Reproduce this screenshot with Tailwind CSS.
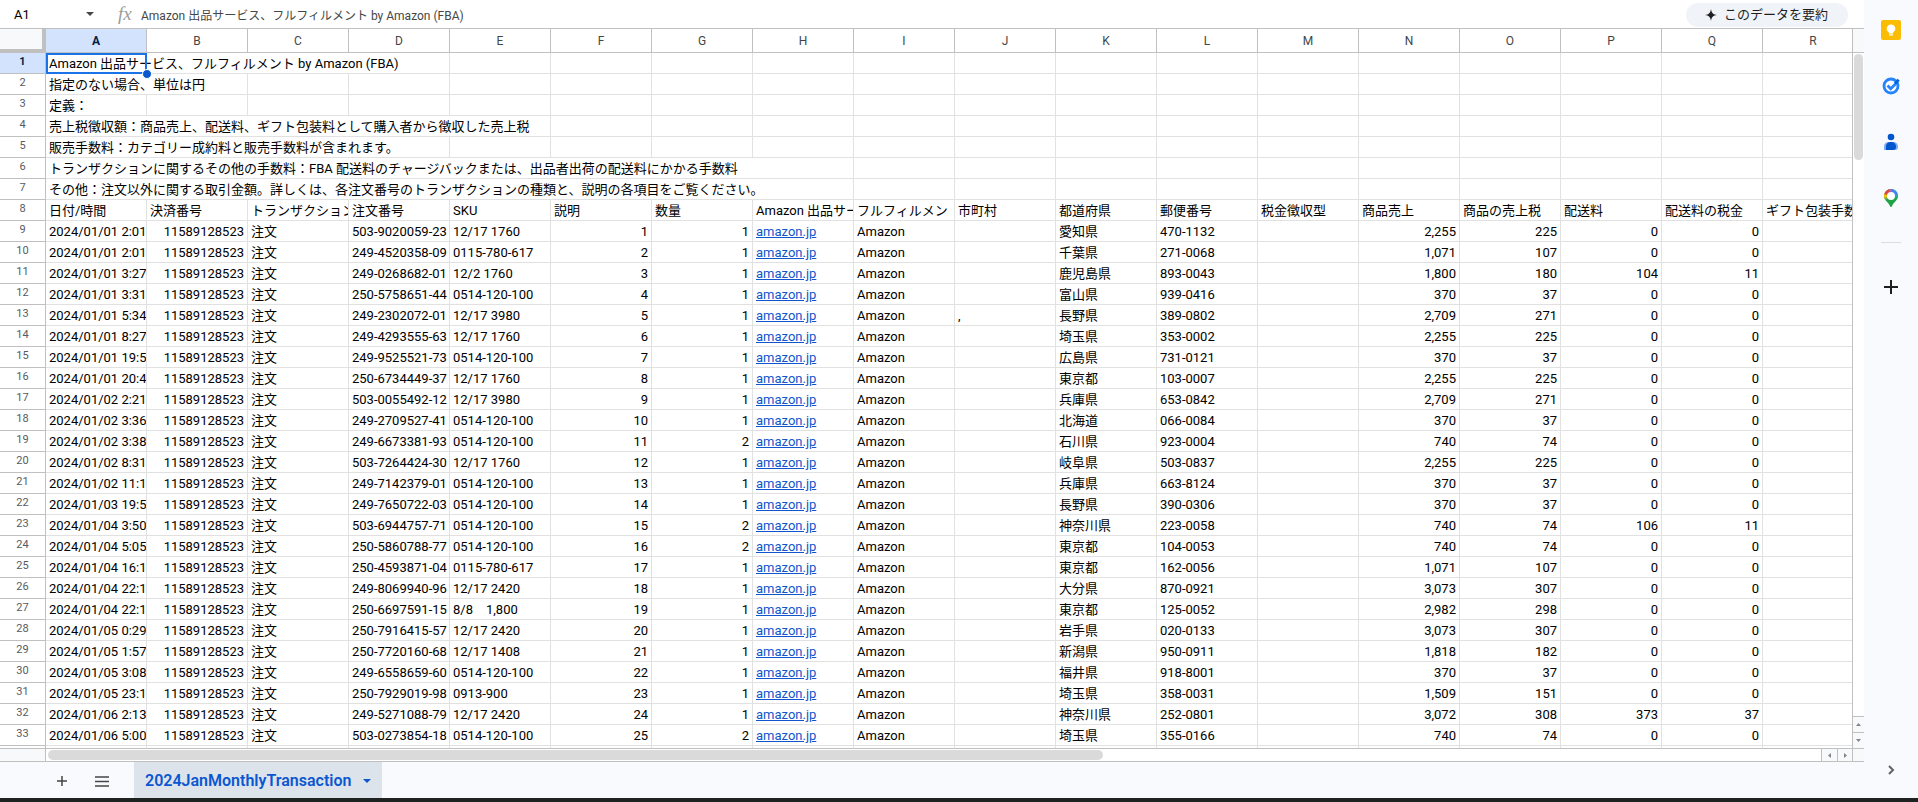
<!DOCTYPE html>
<html lang="ja">
<head>
    <meta charset="UTF-8">
    <meta name="viewport" content="width=device-width, initial-scale=1.0">
    <title>2024JanMonthlyTransaction</title>
    <script src="https://cdn.jsdelivr.net/npm/@tailwindcss/browser@4"></script>
</head>
<body class="flex flex-col h-screen overflow-hidden bg-[#f9fafd] font-[Roboto,'Noto_Sans_CJK_JP',sans-serif] text-[13px] text-black">
    <div class="flex flex-1 min-h-0">
        <main class="flex flex-col flex-1 min-w-0">

            <!-- Formula bar -->
            <div class="flex items-center h-7 shrink-0 bg-white pr-4">
                <input id="nameBox" type="text" value="A1" aria-label="名前ボックス" class="w-[70px] h-6 pl-[14px] text-[13px] outline-none">
                <button aria-label="名前付き範囲" class="w-10 flex justify-center">
                    <svg width="8" height="4" viewBox="0 0 8 4" fill="#444746"><path d="M0 0h8L4 4z"/></svg>
                </button>
                <label for="formula" class="w-[31px] pl-2 shrink-0 font-['Liberation_Serif',serif] italic text-[19px] leading-6 text-[#9a9d9c]">fx</label>
                <input id="formula" type="text" value="Amazon 出品サービス、フルフィルメント by Amazon (FBA)" class="flex-1 min-w-0 h-6 text-[12px] text-[#444746] outline-none">
                <button class="flex items-center h-6 mt-[2px] pl-[18px] pr-5 gap-1.5 rounded-full bg-[#f0f4f9] text-[13px] text-[#1f1f1f]">
                    <svg width="14" height="14" viewBox="0 0 14 14" fill="#1f1f1f"><path d="M7 1C7.500 4.800 9.200 6.500 13 7 9.200 7.500 7.500 9.200 7 13 6.500 9.200 4.800 7.500 1 7 4.800 6.500 6.500 4.800 7 1z"/></svg>
                    このデータを要約
                </button>
            </div>

            <!-- Grid with the vertical scrollbar -->
            <div class="flex flex-1 min-h-0 border-t border-[#c0c0c0] bg-white">
                <div class="relative flex-1 min-w-0 overflow-hidden border-r border-[#c0c0c0]">
                    <table class="table-fixed w-[1864px] border-separate border-spacing-0">
                        <thead>
                            <tr id="head" class="h-6"></tr>
                        </thead>
                        <tbody id="body"></tbody>
                    </table>
                    <!-- Selection on A1 -->
                    <div class="absolute left-[46px] top-6 w-[101px] h-[21px] border-2 border-[#1a73e8]"></div>
                    <div class="absolute left-[142px] top-10 size-[10px] rounded-full bg-[#0b57d0] border border-white"></div>
                </div>
                <div class="flex flex-col w-[11px] shrink-0">
                    <div class="h-6 bg-[#f8f9fa] border-b border-[#c0c0c0]"></div>
                    <div class="mt-px mx-px h-[106px] rounded-full bg-[#dadada]"></div>
                    <button aria-label="上へ" class="flex items-center justify-center h-4 mt-auto border-t border-[#c0c0c0] bg-[#f8f9fa]">
                        <svg width="5" height="3" viewBox="0 0 5 3" fill="#80868b"><path d="M0 3h5L2.500 0z"/></svg>
                    </button>
                    <button aria-label="下へ" class="flex items-center justify-center h-4 border-t border-[#c0c0c0] bg-[#f8f9fa]">
                        <svg width="5" height="3" viewBox="0 0 5 3" fill="#80868b"><path d="M0 0h5L2.500 3z"/></svg>
                    </button>
                </div>
            </div>

            <!-- Horizontal scrollbar -->
            <div class="flex h-[13px] shrink-0 border-t border-[#c0c0c0] bg-white">
                <div class="w-[46px] shrink-0 bg-[#f8f9fa] border-r border-[#c0c0c0]"></div>
                <div class="flex flex-1 min-w-0 pt-px pl-[2px]">
                    <div class="w-[1055px] h-[10px] rounded-full bg-[#dadada]"></div>
                </div>
                <button aria-label="左へ" class="flex items-center justify-center w-4 border-l border-[#c0c0c0] bg-[#f8f9fa]">
                    <svg width="3" height="5" viewBox="0 0 3 5" fill="#80868b"><path d="M3 0v5L0 2.500z"/></svg>
                </button>
                <button aria-label="右へ" class="flex items-center justify-center w-4 border-x border-[#c0c0c0] bg-[#f8f9fa]">
                    <svg width="3" height="5" viewBox="0 0 3 5" fill="#80868b"><path d="M0 0v5L3 2.500z"/></svg>
                </button>
                <div class="w-[11px] bg-[#f8f9fa]"></div>
            </div>

            <!-- Sheet tabs -->
            <div class="flex items-stretch h-[37px] shrink-0 border-t border-[#c0c0c0] pl-[42px]">
                <button aria-label="シートを追加" class="flex items-center justify-center w-10 pt-[2px]">
                    <svg width="10" height="10" viewBox="0 0 10 10" stroke="#444746" stroke-width="1.500"><path d="M5 0v10M0 5h10"/></svg>
                </button>
                <button aria-label="すべてのシート" class="flex items-center justify-center w-10 pt-[2px]">
                    <svg width="14" height="11" viewBox="0 0 14 11" stroke="#444746" stroke-width="1.500"><path d="M0 1h14M0 5.500h14M0 10h14"/></svg>
                </button>
                <button class="flex items-center gap-3 ml-3 px-[11px] pt-[2px] bg-[#dde3ea] text-[16px] font-semibold text-[#0b57d0]">
                    2024JanMonthlyTransaction
                    <svg width="8" height="4" viewBox="0 0 8 4" fill="#0b57d0"><path d="M0 0h8L4 4z"/></svg>
                </button>
            </div>
        </main>

        <!-- Side panel -->
        <aside class="flex flex-col items-center w-[54px] shrink-0 pt-5 pb-[18px]">
            <button aria-label="Keep" class="flex items-center justify-center size-5">
                <svg width="20" height="20" viewBox="0 0 20 20"><rect width="20" height="20" rx="2" fill="#fbbc04"/><path d="M10 4.500a4.200 4.200 0 0 0-2.200 7.800V13.500h4.400v-1.200A4.200 4.200 0 0 0 10 4.500zM8 14.300h4v1.200H8z" fill="#fff"/></svg>
            </button>
            <button aria-label="ToDo リスト" class="flex items-center justify-center size-5 mt-9">
                <svg width="20" height="20" viewBox="0 0 20 20" fill="none"><circle cx="10" cy="10" r="7" fill="#fff" stroke="#2684fc" stroke-width="2.800"/><path d="M6.500 9.500l3.200 3.200L15 7.400" stroke="#2684fc" stroke-width="2.800"/><path d="M14 7.500l3.700-3.700" stroke="#0066da" stroke-width="3"/></svg>
            </button>
            <button aria-label="連絡先" class="flex items-center justify-center size-5 mt-9">
                <svg width="20" height="20" viewBox="0 0 20 20"><circle cx="10" cy="5" r="3.300" fill="#0057cc"/><path d="M3 18v-3.500A4.500 4.500 0 0 1 7.500 10h5a4.500 4.500 0 0 1 4.500 4.500V15a3 3 0 0 1-3 3z" fill="#7baaf7"/><path d="M5 18v-3.500A4.500 4.500 0 0 1 9.500 10h1a4.500 4.500 0 0 1 4.500 4.500V15a3 3 0 0 1-3 3z" fill="#0057cc"/></svg>
            </button>
            <button aria-label="マップ" class="flex items-center justify-center size-5 mt-9">
                <svg width="20" height="20" viewBox="0 0 20 20">
                    <clipPath id="pin"><path d="M10 1a7 7 0 0 0-7 7c0 4.500 5 6.500 6 10.200.3 1 1.700 1 2 0C12 14.500 17 12.500 17 8a7 7 0 0 0-7-7z"/></clipPath>
                    <g clip-path="url(#pin)">
                        <path d="M0 0h20v20H0z" fill="#1ea446"/>
                        <path d="M10 8L0 4v8z" fill="#fbbc04"/>
                        <path d="M10 8L0 5V0h9z" fill="#ea4335"/>
                        <path d="M10 8L7 0h3z" fill="#b06ab3"/>
                        <path d="M10 8V0h10v6z" fill="#4285f4"/>
                        <path d="M10 8L0 11v4z" fill="#7cb342"/>
                        <path d="M10 8l10-2v5z" fill="#12b5a5"/>
                    </g>
                    <circle cx="10" cy="8" r="4" fill="#fff"/>
                </svg>
            </button>
            <div class="w-5 mt-[34px] border-t border-[#dadce0]"></div>
            <button aria-label="アドオンを取得" class="flex items-center justify-center size-5 mt-[34px]">
                <svg width="14" height="14" viewBox="0 0 14 14" stroke="#1f1f1f" stroke-width="2"><path d="M7 0v14M0 7h14"/></svg>
            </button>
            <button aria-label="サイドパネルを非表示" class="flex items-center justify-center size-5 mt-auto">
                <svg width="7" height="10" viewBox="0 0 7 10" fill="none" stroke="#5f6368" stroke-width="2"><path d="M1 1l4 4-4 4"/></svg>
            </button>
        </aside>
    </div>
    <div class="h-1 shrink-0 bg-[#1e2322]"></div>

    <script>
        const letters = 'ABCDEFGHIJKLMNOPQR'.split('');

        // [text, columns it spills over]
        const notes = [
            ['Amazon 出品サービス、フルフィルメント by Amazon (FBA)', 4],
            ['指定のない場合、単位は円', 2],
            ['定義：', 1],
            ['売上税徴収額：商品売上、配送料、ギフト包装料として購入者から徴収した売上税', 5],
            ['販売手数料：カテゴリー成約料と販売手数料が含まれます。', 4],
            ['トランザクションに関するその他の手数料：FBA 配送料のチャージバックまたは、出品者出荷の配送料にかかる手数料', 8],
            ['その他：注文以外に関する取引金額。詳しくは、各注文番号のトランザクションの種類と、説明の各項目をご覧ください。', 8]
        ];

        const titles = ['日付/時間', '決済番号', 'トランザクション', '注文番号', 'SKU', '説明', '数量', 'Amazon 出品サー', 'フルフィルメン', '市町村', '都道府県', '郵便番号', '税金徴収型', '商品売上', '商品の売上税', '配送料', '配送料の税金', 'ギフト包装手数'];

        // date, order, sku, quantity, prefecture, postcode, sales, tax, shipping, shipping tax
        const orders = [
            ['2024/01/01 2:01', '503-9020059-23', '12/17 1760', 1, '愛知県', '470-1132', '2,255', 225, 0, 0],
            ['2024/01/01 2:01', '249-4520358-09', '0115-780-617', 1, '千葉県', '271-0068', '1,071', 107, 0, 0],
            ['2024/01/01 3:27', '249-0268682-01', '12/2 1760', 1, '鹿児島県', '893-0043', '1,800', 180, 104, 11],
            ['2024/01/01 3:31', '250-5758651-44', '0514-120-100', 1, '富山県', '939-0416', 370, 37, 0, 0],
            ['2024/01/01 5:34', '249-2302072-01', '12/17 3980', 1, '長野県', '389-0802', '2,709', 271, 0, 0],
            ['2024/01/01 8:27', '249-4293555-63', '12/17 1760', 1, '埼玉県', '353-0002', '2,255', 225, 0, 0],
            ['2024/01/01 19:5', '249-9525521-73', '0514-120-100', 1, '広島県', '731-0121', 370, 37, 0, 0],
            ['2024/01/01 20:4', '250-6734449-37', '12/17 1760', 1, '東京都', '103-0007', '2,255', 225, 0, 0],
            ['2024/01/02 2:21', '503-0055492-12', '12/17 3980', 1, '兵庫県', '653-0842', '2,709', 271, 0, 0],
            ['2024/01/02 3:36', '249-2709527-41', '0514-120-100', 1, '北海道', '066-0084', 370, 37, 0, 0],
            ['2024/01/02 3:38', '249-6673381-93', '0514-120-100', 2, '石川県', '923-0004', 740, 74, 0, 0],
            ['2024/01/02 8:31', '503-7264424-30', '12/17 1760', 1, '岐阜県', '503-0837', '2,255', 225, 0, 0],
            ['2024/01/02 11:17', '249-7142379-01', '0514-120-100', 1, '兵庫県', '663-8124', 370, 37, 0, 0],
            ['2024/01/03 19:5', '249-7650722-03', '0514-120-100', 1, '長野県', '390-0306', 370, 37, 0, 0],
            ['2024/01/04 3:50', '503-6944757-71', '0514-120-100', 2, '神奈川県', '223-0058', 740, 74, 106, 11],
            ['2024/01/04 5:05', '250-5860788-77', '0514-120-100', 2, '東京都', '104-0053', 740, 74, 0, 0],
            ['2024/01/04 16:1', '250-4593871-04', '0115-780-617', 1, '東京都', '162-0056', '1,071', 107, 0, 0],
            ['2024/01/04 22:1', '249-8069940-96', '12/17 2420', 1, '大分県', '870-0921', '3,073', 307, 0, 0],
            ['2024/01/04 22:1', '250-6697591-15', '8/8　1,800', 1, '東京都', '125-0052', '2,982', 298, 0, 0],
            ['2024/01/05 0:29', '250-7916415-57', '12/17 2420', 1, '岩手県', '020-0133', '3,073', 307, 0, 0],
            ['2024/01/05 1:57', '250-7720160-68', '12/17 1408', 1, '新潟県', '950-0911', '1,818', 182, 0, 0],
            ['2024/01/05 3:08', '249-6558659-60', '0514-120-100', 1, '福井県', '918-8001', 370, 37, 0, 0],
            ['2024/01/05 23:1', '250-7929019-98', '0913-900', 1, '埼玉県', '358-0031', '1,509', 151, 0, 0],
            ['2024/01/06 2:13', '249-5271088-79', '12/17 2420', 1, '神奈川県', '252-0801', '3,072', 308, 373, 37],
            ['2024/01/06 5:00', '503-0273854-18', '0514-120-100', 2, '埼玉県', '355-0166', 740, 74, 0, 0]
        ];

        const numeric = [1, 5, 6, 13, 14, 15, 16];

        function cell(text, span, right) {
            const align = right ? 'text-right' : 'text-left';
            return `<td colspan="${span}" class="h-[21px] px-[3px] pt-[2px] pb-0 border-r border-b border-[#e1e1e1] leading-[18px] whitespace-pre overflow-hidden ${align}">${text}</td>`;
        }

        function rowHead(n) {
            const look = n === 1 ? 'bg-[#d3e3fd] font-bold text-[#041e49]' : 'font-normal text-[#575b5f]';
            return `<th scope="row" class="h-[21px] p-0 border-r border-b border-[#c0c0c0] text-[11px] leading-[18px] align-top ${look}">${n}</th>`;
        }

        document.getElementById('head').innerHTML =
            '<td class="w-[46px] p-0 bg-[#f8f9fa] border-r-4 border-b-4 border-[#c0c0c0]"></td>' +
            letters.map((l, i) => {
                const look = i === 0 ? 'bg-[#d3e3fd] font-bold text-[#041e49]' : 'font-normal text-[#444746]';
                return `<th scope="col" class="w-[101px] p-0 border-r border-b border-[#c0c0c0] text-[12px] leading-5 ${look}">${l}</th>`;
            }).join('');

        const rows = notes.map(([text, span]) =>
            cell(text, span) + letters.slice(span).map(() => cell('', 1)).join(''));

        rows.push(titles.map(t => cell(t, 1)).join(''));

        orders.forEach(([date, order, sku, qty, pref, post, sales, tax, ship, shipTax], i) => {
            const link = '<a href="#" class="text-[#1155cc] underline">amazon.jp</a>';
            const town = i === 4 ? ',' : '';
            rows.push([date, '11589128523', '注文', order, sku, i + 1, qty, link, 'Amazon', town, pref, post, '', sales, tax, ship, shipTax, '']
                .map((v, c) => cell(v, 1, numeric.includes(c))).join(''));
        });

        // next row, cut off by the scrollbar
        const last = '<th class="h-[21px] p-0 border-r border-[#c0c0c0]"></th>' + letters.map(() => cell('', 1)).join('');

        document.getElementById('body').innerHTML =
            rows.map((r, i) => `<tr>${rowHead(i + 1)}${r}</tr>`).join('') + `<tr>${last}</tr>`;
    </script>
</body>
</html>
